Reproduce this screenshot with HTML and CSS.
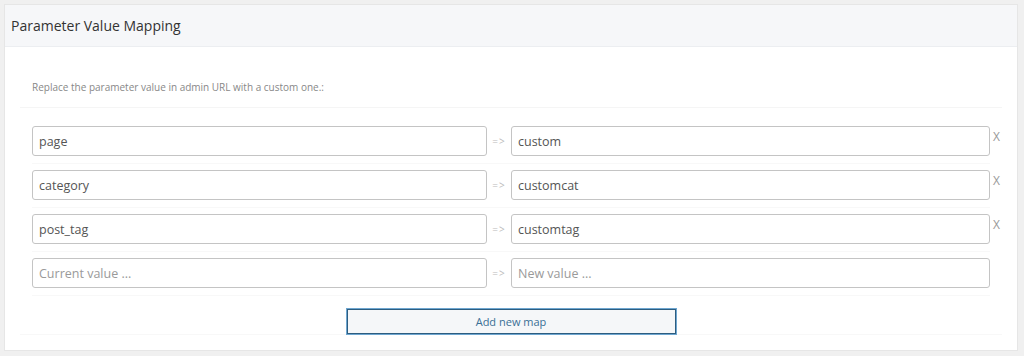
FILE: index.html
```html
<!DOCTYPE html>
<html lang="en">
<head>
    <meta charset="UTF-8">
    <title>Parameter Value Mapping</title>
    <link rel="stylesheet" href="styles.css">
</head>
<body>

    <div class="panel">
        <div class="panel-head">
            <h2>Parameter Value Mapping</h2>
        </div>

        <div class="panel-body">
            <p class="desc">Replace the parameter value in admin URL with a custom one.:</p>

            <!-- Existing mappings -->
            <div class="map-row">
                <input type="text" class="map-input" value="page">
                <span class="arrow">=&gt;</span>
                <input type="text" class="map-input" value="custom">
                <span class="remove">X</span>
            </div>
            <div class="map-row">
                <input type="text" class="map-input" value="category">
                <span class="arrow">=&gt;</span>
                <input type="text" class="map-input" value="customcat">
                <span class="remove">X</span>
            </div>
            <div class="map-row">
                <input type="text" class="map-input" value="post_tag">
                <span class="arrow">=&gt;</span>
                <input type="text" class="map-input" value="customtag">
                <span class="remove">X</span>
            </div>

            <!-- Empty row for new mapping -->
            <div class="map-row">
                <input type="text" class="map-input" placeholder="Current value ...">
                <span class="arrow">=&gt;</span>
                <input type="text" class="map-input" placeholder="New value ...">
                <span class="remove"></span>
            </div>

            <div class="add-row">
                <button class="add-btn">Add new map</button>
            </div>
        </div>
    </div>

</body>
</html>
```

FILE: styles.css
```css
body {
    margin: 0;
    padding: 4px 6px 6px 4px;
    background-color: #f0f0f0;
    font-family: "Open Sans", Arial, sans-serif;
}
.panel {
    background-color: #fff;
    border: 1px solid #e6e6e6;
}
.panel-head {
    height: 41px;
    display: flex;
    align-items: center;
    padding: 0 6px;
    background-color: #f6f7f9;
    border-bottom: 1px solid #eceef1;
}
.panel-head h2 {
    margin: 0;
    font-size: 14px;
    font-weight: normal;
    color: #333;
}
.panel-body {
    padding: 20px 15px 15px 15px;
}
.desc {
    margin: 0;
    padding: 13px 12px 12px 12px;
    font-size: 10px;
    line-height: 15px;
    color: #888;
    border-bottom: 1px solid #f5f5f5;
}
.map-row {
    display: grid;
    grid-template-columns: 455px 24px 479px 1fr;
    align-items: center;
    margin: 0 12px;
    padding: 6px 0 7px 0;
    border-bottom: 1px solid #f8f8f8;
}
.desc + .map-row {
    margin-top: 12px;
}
.map-input {
    box-sizing: border-box;
    height: 30px;
    padding: 0 6px;
    border: 1px solid #c4c4c4;
    border-radius: 3px;
    font-family: inherit;
    font-size: 12.5px;
    color: #555;
    background: #fff;
}
.map-input::placeholder {
    color: #9a9a9a;
}
.arrow {
    text-align: center;
    font-size: 10px;
    color: #bbb;
    letter-spacing: 1px;
}
.remove {
    padding-left: 3px;
    font-size: 12px;
    line-height: 16px;
    color: #999;
    align-self: start;
    margin-top: 3px;
}
.add-row {
    display: flex;
    justify-content: center;
    padding: 13px 0 0 0;
    border-bottom: 1px solid #f8f8f8;
}
.add-btn {
    width: 329px;
    height: 25px;
    background-color: #f5f7f9;
    border: 1px solid #2d5d80;
    box-shadow: 0 0 0 1px #6ea6d0;
    font-family: inherit;
    font-size: 11px;
    color: #3a6f96;
    cursor: pointer;
}
```
